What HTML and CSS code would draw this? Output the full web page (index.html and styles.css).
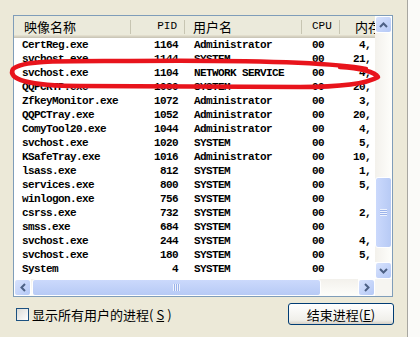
FILE: index.html
```html
<!DOCTYPE html>
<html>
<head>
    <meta charset="utf-8">
    <title>Windows 任务管理器 - 进程</title>
    <link rel="stylesheet" href="styles.css">
</head>
<body>
    <div class="window">
        <div class="pane">
            <div class="list">
                <div class="view">
                    <div class="row head">
                        <div class="c name">映像名称</div>
                        <div class="c pid">PID</div>
                        <div class="c user">用户名</div>
                        <div class="c cpu">CPU</div>
                        <div class="c mem">内存使用</div>
                    </div>
                    <div class="row"><div class="c name">CertReg.exe</div><div class="c pid">1164</div><div class="c user">Administrator</div><div class="c cpu">00</div><div class="c mem">4,</div></div>
                    <div class="row"><div class="c name">svchost.exe</div><div class="c pid">1144</div><div class="c user">SYSTEM</div><div class="c cpu">00</div><div class="c mem">21,</div></div>
                    <div class="row"><div class="c name">svchost.exe</div><div class="c pid">1104</div><div class="c user">NETWORK SERVICE</div><div class="c cpu">00</div><div class="c mem">4,</div></div>
                    <div class="row"><div class="c name">QQPCRTP.exe</div><div class="c pid">1080</div><div class="c user">SYSTEM</div><div class="c cpu">00</div><div class="c mem">20,</div></div>
                    <div class="row"><div class="c name">ZfkeyMonitor.exe</div><div class="c pid">1072</div><div class="c user">Administrator</div><div class="c cpu">00</div><div class="c mem">3,</div></div>
                    <div class="row"><div class="c name">QQPCTray.exe</div><div class="c pid">1052</div><div class="c user">Administrator</div><div class="c cpu">00</div><div class="c mem">20,</div></div>
                    <div class="row"><div class="c name">ComyTool20.exe</div><div class="c pid">1044</div><div class="c user">Administrator</div><div class="c cpu">00</div><div class="c mem">4,</div></div>
                    <div class="row"><div class="c name">svchost.exe</div><div class="c pid">1020</div><div class="c user">SYSTEM</div><div class="c cpu">00</div><div class="c mem">5,</div></div>
                    <div class="row"><div class="c name">KSafeTray.exe</div><div class="c pid">1016</div><div class="c user">Administrator</div><div class="c cpu">00</div><div class="c mem">10,</div></div>
                    <div class="row"><div class="c name">lsass.exe</div><div class="c pid">812</div><div class="c user">SYSTEM</div><div class="c cpu">00</div><div class="c mem">1,</div></div>
                    <div class="row"><div class="c name">services.exe</div><div class="c pid">800</div><div class="c user">SYSTEM</div><div class="c cpu">00</div><div class="c mem">5,</div></div>
                    <div class="row"><div class="c name">winlogon.exe</div><div class="c pid">756</div><div class="c user">SYSTEM</div><div class="c cpu">00</div><div class="c mem"></div></div>
                    <div class="row"><div class="c name">csrss.exe</div><div class="c pid">732</div><div class="c user">SYSTEM</div><div class="c cpu">00</div><div class="c mem">2,</div></div>
                    <div class="row"><div class="c name">smss.exe</div><div class="c pid">684</div><div class="c user">SYSTEM</div><div class="c cpu">00</div><div class="c mem"></div></div>
                    <div class="row"><div class="c name">svchost.exe</div><div class="c pid">244</div><div class="c user">SYSTEM</div><div class="c cpu">00</div><div class="c mem">4,</div></div>
                    <div class="row"><div class="c name">svchost.exe</div><div class="c pid">180</div><div class="c user">SYSTEM</div><div class="c cpu">00</div><div class="c mem">5,</div></div>
                    <div class="row"><div class="c name">System</div><div class="c pid">4</div><div class="c user">SYSTEM</div><div class="c cpu">00</div><div class="c mem"></div></div>
                </div>

                <div class="vscroll">
                    <div class="sbtn">
                        <svg width="9" height="6" viewBox="0 0 9 6"><path d="M1 5 L4.5 1.5 L8 5" fill="none" stroke="#4d6185" stroke-width="2"/></svg>
                    </div>
                    <div class="track vtrack"><div class="thumb vthumb"><span class="grip"></span></div></div>
                    <div class="sbtn">
                        <svg width="9" height="6" viewBox="0 0 9 6"><path d="M1 1 L4.5 4.5 L8 1" fill="none" stroke="#4d6185" stroke-width="2"/></svg>
                    </div>
                </div>

                <div class="hscroll">
                    <div class="sbtn">
                        <svg width="6" height="9" viewBox="0 0 6 9"><path d="M5 1 L1.5 4.5 L5 8" fill="none" stroke="#4d6185" stroke-width="2"/></svg>
                    </div>
                    <div class="track htrack"><div class="thumb hthumb"><span class="grip"></span></div></div>
                    <div class="sbtn">
                        <svg width="6" height="9" viewBox="0 0 6 9"><path d="M1 1 L4.5 4.5 L1 8" fill="none" stroke="#4d6185" stroke-width="2"/></svg>
                    </div>
                </div>

                <div class="corner"></div>
            </div>

            <div class="footer">
                <label class="check"><span class="box"></span>显示所有用户的进程(<u>S</u>)</label>
                <button class="btn">结束进程(<u>E</u>)</button>
            </div>
        </div>
        <div class="edge"></div>
    </div>

    <!-- red marker drawn over the list -->
    <svg class="mark" width="420" height="337" viewBox="0 0 420 337">
        <path d="M366 69 C330 62 250 60 130 61 C60 61 22 60 13 69 C7 79 28 86 80 86 L300 87 C345 87 368 83 378 77 C375 72 360 68 340 67"
              fill="none" stroke="#e8141c" stroke-width="4.5" stroke-linecap="round" stroke-linejoin="round"/>
    </svg>
</body>
</html>
```

FILE: styles.css
```css
body {
    margin: 0;
    width: 420px;
    height: 337px;
    overflow: hidden;
    position: relative;
    background-color: #ece9d8;
    font-family: "Liberation Mono", "Noto Sans CJK SC", monospace;
    color: #000;
}

.window {
    display: flex;
    height: 337px;
}

.pane {
    width: 394px;
    padding: 15px 0 0 13px;
}

.edge {
    margin-left: auto;
    width: 12px;
    border-left: 1px solid #a7a6a0;
    background-color: #fbfbf9;
}

.list {
    width: 378px;
    height: 280px;
    border: 1px solid #7f9db9;
    background-color: #fff;
    display: grid;
    grid-template-columns: 361px 17px;
    grid-template-rows: 263px 17px;
}

.view {
    overflow: hidden;
}

.row {
    display: flex;
    height: 14px;
    line-height: 14px;
    font-size: 11px;
    font-weight: bold;
    letter-spacing: -0.6px;
    white-space: nowrap;
}

.c {
    flex: none;
    box-sizing: border-box;
}

.name { width: 117px; padding-left: 8px; }
.pid  { width: 54px; text-align: right; padding-right: 7px; }
.user { width: 117px; padding-left: 9px; }
.cpu  { width: 38px; padding-left: 10px; }
.mem  { width: 70px; text-align: right; padding-right: 39px; }

.head {
    height: 22px;
    line-height: 21px;
    font-size: 13px;
    font-weight: normal;
    letter-spacing: 0;
    font-family: "Noto Sans CJK SC", sans-serif;
    background-color: #ebeadb;
    box-shadow: inset 0 -1px #cbc7b8, inset 0 -2px #d6d2c2, inset 0 -3px #e2decd;
}

.head .c {
    background: linear-gradient(#c7c5b2, #c7c5b2) no-repeat right 4px / 1px 14px;
}

.head .name { padding-left: 10px; }
.head .pid  { padding-right: 8px; font-family: "Liberation Mono", monospace; font-size: 11px; }
.head .user { padding-left: 8px; }
.head .cpu  { padding-left: 10px; font-family: "Liberation Mono", monospace; font-size: 11px; }
.head .mem  { text-align: left; padding-left: 15px; }

/* scrollbars */
.vscroll {
    display: flex;
    flex-direction: column;
}

.hscroll {
    display: flex;
}

.sbtn {
    flex: none;
    width: 17px;
    height: 17px;
    box-sizing: border-box;
    border: 1px solid #fff;
    border-radius: 3px;
    background: linear-gradient(135deg, #d8e3fd, #b4c8f6);
    display: flex;
    align-items: center;
    justify-content: center;
}

.track {
    flex: 1;
    display: flex;
}

.vtrack {
    flex-direction: column;
    background: linear-gradient(to right, #f3f1ec, #fefefb);
}

.htrack {
    background: linear-gradient(#f3f1ec, #fefefb);
}

.thumb {
    box-sizing: border-box;
    border: 1px solid #fff;
    border-radius: 3px;
    display: flex;
    align-items: center;
    justify-content: center;
}

.vthumb {
    margin-top: 144px;
    height: 71px;
    background: linear-gradient(to right, #cbd9fc, #b7caf5);
}

.hthumb {
    margin-left: 1px;
    width: 289px;
    background: linear-gradient(#cbd9fc, #b7caf5);
}

.grip {
    width: 7px;
    height: 7px;
    background: repeating-linear-gradient(#eef3fe 0 1px, #9cb3ea 1px 2px);
}

.hthumb .grip {
    background: repeating-linear-gradient(to right, #eef3fe 0 1px, #9cb3ea 1px 2px);
}

.corner {
    background-color: #f6f5f1;
}

/* bottom bar */
.footer {
    width: 381px;
    height: 22px;
    margin-top: 6px;
    display: flex;
    align-items: center;
    justify-content: space-between;
    font-family: "Noto Sans CJK SC", sans-serif;
    font-size: 13px;
}

.check {
    display: flex;
    align-items: center;
    gap: 3px;
    padding-left: 3px;
}

.box {
    width: 13px;
    height: 13px;
    box-sizing: border-box;
    border: 1px solid #1c5180;
    background: linear-gradient(135deg, #dcdcd7, #fff);
}

.btn {
    width: 106px;
    height: 22px;
    padding: 0;
    font-family: "Noto Sans CJK SC", sans-serif;
    font-size: 13px;
    color: #000;
    border: 1px solid #003c74;
    border-radius: 3px;
    background: linear-gradient(#fff, #f0efea 80%, #d6d0c5);
}

.mark {
    position: absolute;
    left: 0;
    top: 0;
    pointer-events: none;
}
```
